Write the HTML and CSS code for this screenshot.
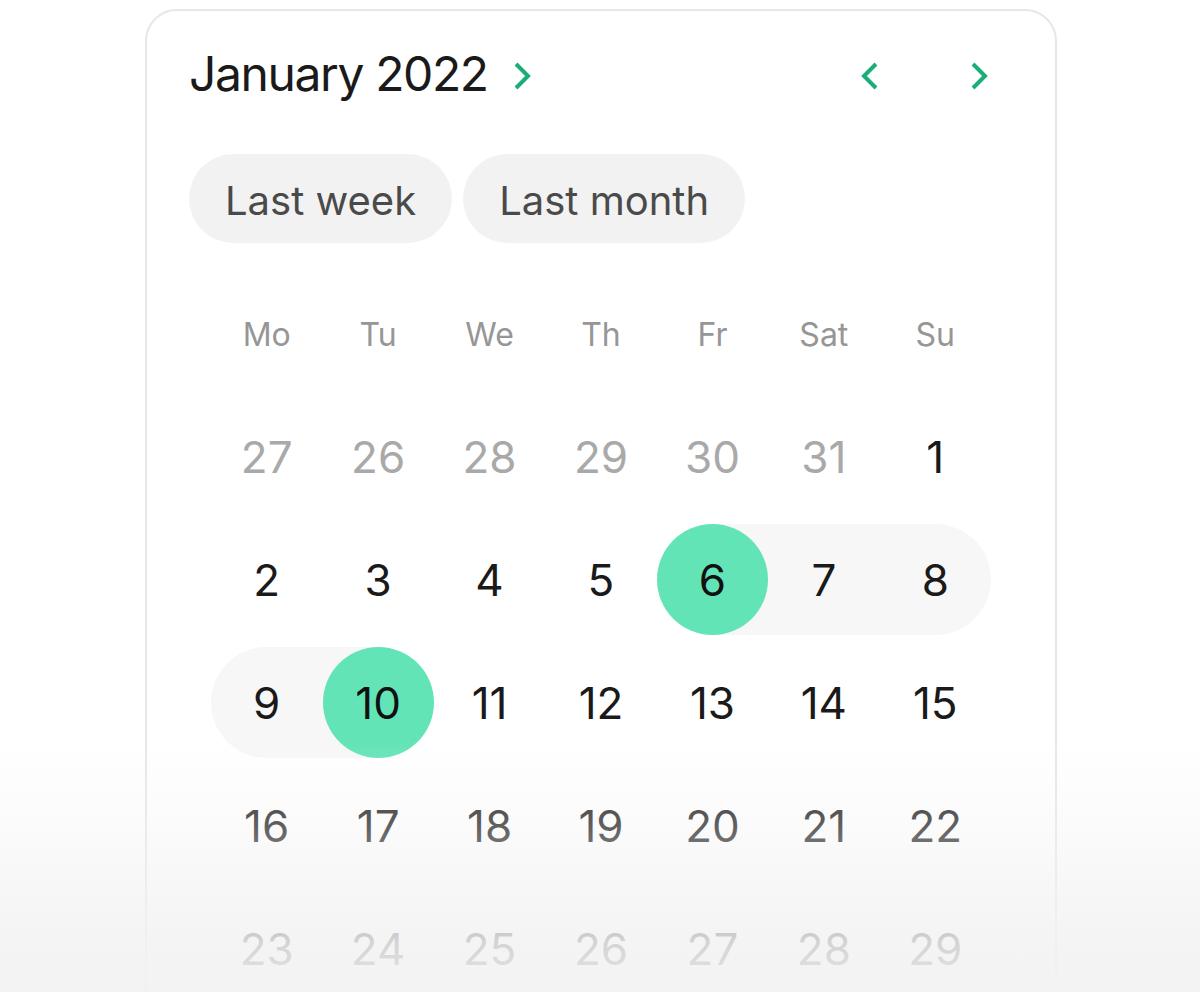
FILE: index.html
```html
<!DOCTYPE html>
<html lang="en">
<head>
<meta charset="utf-8">
<title>Calendar</title>
<link rel="stylesheet" href="styles.css">
</head>
<body>
<div class="page">
  <div class="card">
    <div class="header">
      <div class="month">
        <span class="title">January 2022</span>
        <svg class="chev chev-title" width="20" height="28" viewBox="0 0 20 28"><path d="M4 2 L16 14 L4 26" /></svg>
      </div>
      <div class="nav">
        <svg class="chev" width="20" height="28" viewBox="0 0 20 28"><path d="M16 2 L4 14 L16 26" /></svg>
        <svg class="chev" width="20" height="28" viewBox="0 0 20 28"><path d="M4 2 L16 14 L4 26" /></svg>
      </div>
    </div>
    <div class="pills">
      <span class="pill">Last week</span>
      <span class="pill">Last month</span>
    </div>
    <div class="grid">
      <div class="cell dow">Mo</div><div class="cell dow">Tu</div><div class="cell dow">We</div><div class="cell dow">Th</div><div class="cell dow">Fr</div><div class="cell dow">Sat</div><div class="cell dow">Su</div>

      <div class="cell muted">27</div><div class="cell muted">26</div><div class="cell muted">28</div><div class="cell muted">29</div><div class="cell muted">30</div><div class="cell muted">31</div><div class="cell">1</div>

      <div class="cell">2</div><div class="cell">3</div><div class="cell">4</div><div class="cell">5</div><div class="cell range-start"><span class="sel">6</span></div><div class="cell range">7</div><div class="cell range range-right">8</div>

      <div class="cell range range-left">9</div><div class="cell range-end"><span class="sel">10</span></div><div class="cell">11</div><div class="cell">12</div><div class="cell">13</div><div class="cell">14</div><div class="cell">15</div>

      <div class="cell">16</div><div class="cell">17</div><div class="cell">18</div><div class="cell">19</div><div class="cell">20</div><div class="cell">21</div><div class="cell">22</div>

      <div class="cell">23</div><div class="cell">24</div><div class="cell">25</div><div class="cell">26</div><div class="cell">27</div><div class="cell">28</div><div class="cell">29</div>
    </div>
  </div>
  <div class="fade"></div>
</div>
</body>
</html>
```

FILE: styles.css
```css
html, body {
  margin: 0;
  padding: 0;
  background: #ffffff;
  height: 992px;
  overflow: hidden;
}

.page {
  position: relative;
  height: 992px;
  overflow: hidden;
  font-family: Inter, "Noto Sans", sans-serif;
  color: #1a1a1a;
  padding-top: 9px;
  box-sizing: border-box;
}

.card {
  box-sizing: border-box;
  width: 912px;
  margin-left: 145px;
  border: 2px solid #e7e7e7;
  border-radius: 32px;
  padding: 34px 44px 40px 42px;
  background: #ffffff;
}

.header {
  display: flex;
  align-items: center;
  justify-content: space-between;
}

.month {
  display: flex;
  align-items: center;
  gap: 24px;
}

.title {
  font-size: 48px;
  line-height: 58px;
  font-weight: 400;
  letter-spacing: -1.4px;
}

.chev {
  display: block;
  margin-top: 3px;
}

.chev path {
  fill: none;
  stroke: #19ae78;
  stroke-width: 4;
  stroke-linejoin: miter;
}

.nav {
  display: flex;
  align-items: center;
  gap: 89px;
  padding-right: 22px;
}

.pills {
  display: flex;
  gap: 11px;
  margin-top: 51px;
}

.pill {
  display: inline-block;
  background: #f2f2f2;
  color: #4a4a4a;
  font-size: 40px;
  line-height: 49px;
  padding: 22px 36px 18px;
  border-radius: 60px;
}

.grid {
  display: grid;
  grid-template-columns: repeat(7, 1fr);
  grid-auto-rows: 111px;
  row-gap: 12px;
  margin: 35px 20px 0 22px;
}

.cell {
  display: flex;
  align-items: center;
  justify-content: center;
  font-size: 44px;
  color: #1a1a1a;
}

.dow {
  font-size: 32px;
  color: #969696;
  padding-top: 2px;
}

.muted {
  color: #a9a9a9;
}

.range {
  background: #f7f7f7;
}

.range-right {
  border-radius: 0 56px 56px 0;
}

.range-left {
  border-radius: 56px 0 0 56px;
}

.range-start {
  background: linear-gradient(to right, transparent 50%, #f7f7f7 50%);
}

.range-end {
  background: linear-gradient(to right, #f7f7f7 50%, transparent 50%);
}

.sel {
  width: 111px;
  height: 111px;
  border-radius: 50%;
  background: #63e4b6;
  color: #111111;
  display: flex;
  align-items: center;
  justify-content: center;
}

.fade {
  position: absolute;
  left: 0;
  right: 0;
  top: 740px;
  bottom: 0;
  background: linear-gradient(to bottom,
    rgba(242, 242, 242, 0) 0%,
    rgba(242, 242, 242, 0.32) 34%,
    rgba(242, 242, 242, 0.86) 80%,
    rgba(242, 242, 242, 0.95) 100%);
  pointer-events: none;
}
```
